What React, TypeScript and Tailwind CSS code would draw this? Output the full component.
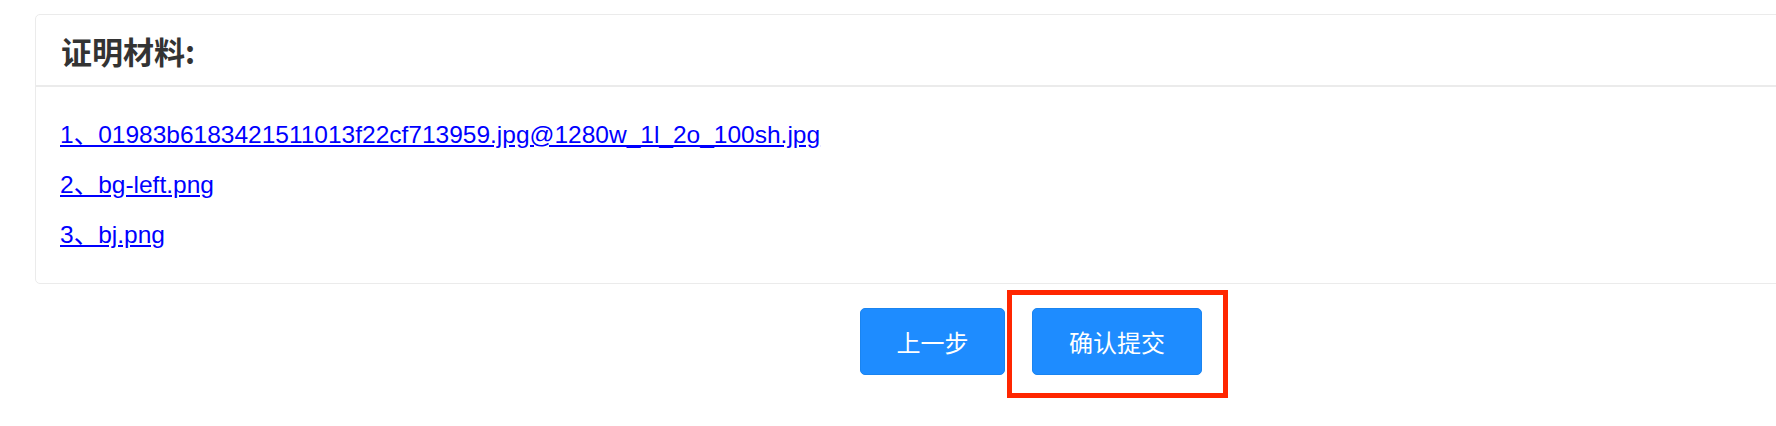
const files = [
    "1、01983b6183421511013f22cf713959.jpg@1280w_1l_2o_100sh.jpg",
    "2、bg-left.png",
    "3、bj.png",
];

export default function App() {
    return (
        <div className="w-[1776px] h-[426px] overflow-hidden bg-white">
            <div className="w-[2062px] pl-[35px] pt-[14px]">
                {/* Card */}
                <div className="w-[1992px] border border-[#ebebeb] rounded-[5px] bg-white">
                    <div className="h-[72px] flex items-center px-[25px] border-b-2 border-[#ebebeb]">
                        <h2 className="text-[31px] font-bold text-[#333333] leading-none font-['Noto_Sans_CJK_SC',sans-serif]">
                            证明材料:
                        </h2>
                    </div>
                    <div className="py-[30px] px-[24px] flex flex-col gap-[14px]">
                        {files.map((name) => (
                            <div key={name} className="h-[36px] leading-[36px]">
                                <a
                                    href="#"
                                    className="text-[24.5px] text-[#0000ff] underline font-['Liberation_Sans','Noto_Sans_CJK_SC',sans-serif]"
                                >
                                    {name}
                                </a>
                            </div>
                        ))}
                    </div>
                </div>

                {/* Actions */}
                <div className="w-[1992px] mt-[24px] flex justify-center gap-[27px] font-['Noto_Sans_CJK_SC',sans-serif]">
                    <button className="w-[145px] h-[67px] rounded-[5px] bg-[#1e8cff] border border-[#1a84f0] text-white text-[24px]">
                        上一步
                    </button>
                    <div className="relative">
                        <button className="w-[170px] h-[67px] rounded-[5px] bg-[#1e8cff] border border-[#1a84f0] text-white text-[24px]">
                            确认提交
                        </button>
                        <div className="absolute left-[-25px] top-[-18px] w-[221px] h-[108px] border-[5px] border-[#ff2600] pointer-events-none" />
                    </div>
                </div>
            </div>
        </div>
    );
}
